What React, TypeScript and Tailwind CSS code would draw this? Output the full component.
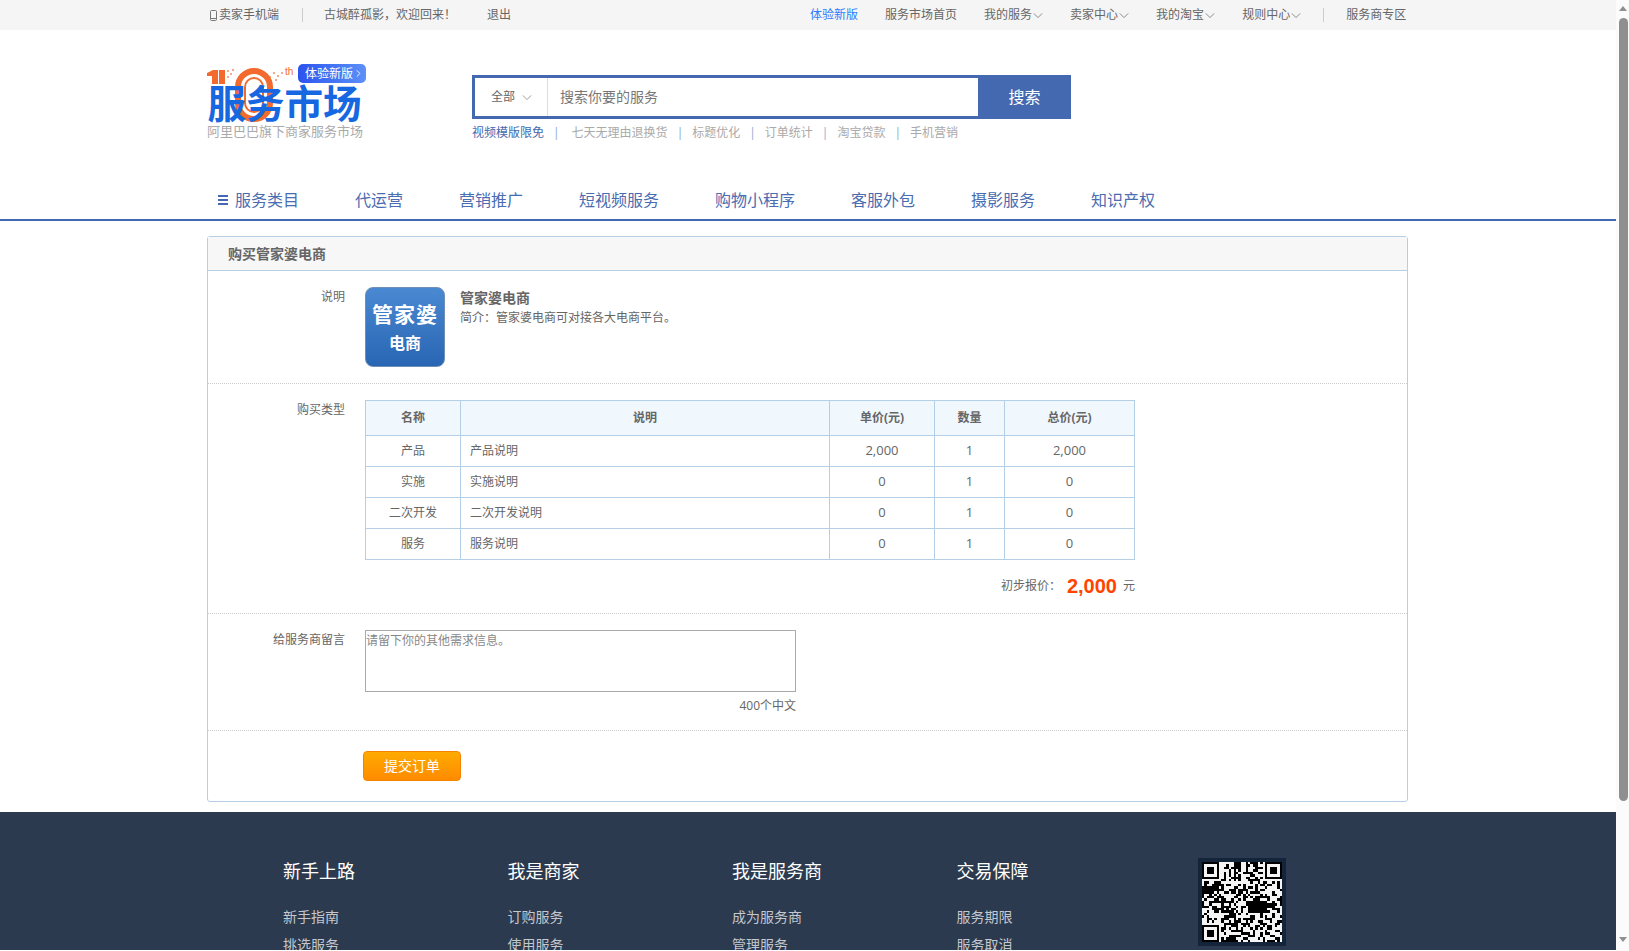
import { ChevronRight } from "lucide-react";

const FONT = "font-['Open_Sans','Noto_Sans_CJK_SC',sans-serif]";

const Chevron = ({ className }: { className: string }) => (
  <svg viewBox="0 0 12 8" fill="none" stroke="currentColor" strokeWidth="1" className={className}>
    <path d="M1 1.5 6 6.5 11 1.5" />
  </svg>
);

const Sep = () => <span className="text-[#8fa9d0] text-xs">|</span>;

const TopMenu = ({ label }: { label: string }) => (
  <span className="flex items-center gap-px">
    {label}
    <Chevron className="w-[10px] h-[7px] text-[#777]" />
  </span>
);

const TopBar = () => (
  <div className="h-[30px] bg-[#f5f5f5] flex items-center pl-[210px] text-xs text-[#666]">
    <svg viewBox="0 0 7 11" fill="none" stroke="#777" className="w-[7px] h-[11px] mr-[2px]">
      <rect x="0.5" y="0.5" width="6" height="10" rx="1" />
      <path d="M0.5 8.5h6" />
    </svg>
    <span>卖家手机端</span>
    <span className="w-px h-[14px] bg-[#ccc] ml-[23px] mr-[21px]" />
    <span>古城醉孤影，欢迎回来！</span>
    <span className="ml-[31px]">退出</span>
    <div className="flex items-center gap-[27px] ml-[299px]">
      <span className="text-[#2b7cff]">体验新版</span>
      <span>服务市场首页</span>
      <TopMenu label="我的服务" />
      <TopMenu label="卖家中心" />
      <TopMenu label="我的淘宝" />
      <TopMenu label="规则中心" />
      <span className="w-px h-[14px] bg-[#ccc] -mx-[5px]" />
      <span>服务商专区</span>
    </div>
  </div>
);

const Logo = () => (
  <div className="relative w-[155px] h-[76px] shrink-0">
    <svg viewBox="0 0 155 60" className="absolute left-0 top-[2px] w-[155px] h-[60px]" fill="none">
      <path d="M0 7 6 4h5v14H5V10H0z" fill="#f26a2e" />
      <rect x="12" y="4" width="6" height="14" fill="#f26a2e" />
      <g fill="#f6a98a">
        <rect x="20" y="4" width="2" height="2" />
        <rect x="23" y="7" width="2" height="2" />
        <rect x="20" y="10" width="2" height="2" />
        <rect x="25" y="3" width="2" height="2" />
        <rect x="66" y="6" width="2" height="2" />
        <rect x="70" y="9" width="2" height="2" />
        <rect x="74" y="6" width="2" height="2" />
        <rect x="68" y="13" width="2" height="2" />
        <rect x="62" y="10" width="2" height="2" />
      </g>
      <rect x="31" y="5" width="32" height="48" rx="16" stroke="#f26a2e" strokeWidth="6" />
      <rect x="38" y="12" width="18" height="34" rx="9" stroke="#f26a2e" strokeWidth="2" />
    </svg>
    <span className="absolute left-[78px] top-[3px] text-[10px] leading-none text-[#f26a2e] font-['Liberation_Sans',sans-serif]">
      th
    </span>
    <span className="absolute left-[91px] top-0 w-[68px] h-[19px] rounded-[5px] bg-gradient-to-r from-[#2d52ee] to-[#5d90f8] text-white text-xs flex items-center pl-[7px]">
      体验新版
      <ChevronRight size={11} strokeWidth={2} />
    </span>
    <span className="absolute left-0 top-[17px] w-[155px] text-center text-[38.5px] leading-[44px] font-bold text-[#1767e0] whitespace-nowrap">
      服务市场
    </span>
    <span className="absolute left-0 top-[58px] text-[13px] leading-[18px] text-[#aaa] whitespace-nowrap">
      阿里巴巴旗下商家服务市场
    </span>
  </div>
);

const hotLinks = ["七天无理由退换货", "标题优化", "订单统计", "淘宝贷款", "手机营销"];

const SearchBox = () => (
  <div className="ml-[110px] mt-[11px] w-[599px]">
    <div className="flex h-[44px] border-[3px] border-[#4469b0]">
      <div className="w-[73px] border-r border-[#ddd] text-xs text-[#666] flex items-center pl-[16px] gap-[7px]">
        全部
        <Chevron className="w-[10px] h-[7px] text-[#888]" />
      </div>
      <div className="flex-1 text-sm text-[#777] flex items-center pl-[12px]">搜索你要的服务</div>
      <div className="w-[93px] -my-[3px] -mr-[3px] bg-[#4469b0] text-white text-base flex items-center justify-center">
        搜索
      </div>
    </div>
    <div className="flex items-center gap-[9px] mt-[6px] text-xs text-[#aaa]">
      <span className="text-[#4469b0]">视频模版限免</span>
      {hotLinks.map((link) => (
        <span key={link} className="flex items-center gap-[9px]">
          <Sep />
          <span className={link === hotLinks[0] ? "ml-[3px]" : ""}>{link}</span>
        </span>
      ))}
    </div>
  </div>
);

const navItems = ["代运营", "营销推广", "短视频服务", "购物小程序", "客服外包", "摄影服务", "知识产权"];

const Nav = () => (
  <div className="h-[43px] border-b-2 border-[#4469b0] flex items-start pt-[11px] pl-[218px] text-base leading-[22px] text-[#4a6cb0]">
    <div className="flex items-center gap-[7px] mr-[56px]">
      <div className="w-[10px] flex flex-col gap-[2px]">
        <span className="h-[2px] bg-[#4469b0]" />
        <span className="h-[2px] bg-[#4469b0]" />
        <span className="h-[2px] bg-[#4469b0]" />
      </div>
      服务类目
    </div>
    <div className="flex gap-[56px]">
      {navItems.map((item) => (
        <span key={item}>{item}</span>
      ))}
    </div>
  </div>
);

const AppIcon = () => (
  <div className="w-[80px] h-[80px] rounded-[8px] border border-[#6f8fb5] bg-gradient-to-b from-[#4a89d2] to-[#2865b3] flex flex-col items-center text-white font-bold shrink-0">
    <span className="text-[21px] leading-[26px] mt-[13px] tracking-[1px] whitespace-nowrap">管家婆</span>
    <span className="text-[16px] leading-[20px] mt-[6px]">电商</span>
  </div>
);

const tableRows = [
  ["产品", "产品说明", "2,000", "1", "2,000"],
  ["实施", "实施说明", "0", "1", "0"],
  ["二次开发", "二次开发说明", "0", "1", "0"],
  ["服务", "服务说明", "0", "1", "0"],
];

const OrderTable = () => (
  <table className="w-[770px] border-collapse table-fixed text-xs text-[#666] border border-[#b5cfe6]">
    <thead>
      <tr className="h-[35px] bg-[#f0f7fd] font-bold">
        <th className="w-[95px] border border-[#b5cfe6]">名称</th>
        <th className="w-[369px] border border-[#b5cfe6]">说明</th>
        <th className="w-[105px] border border-[#b5cfe6]">单价(元)</th>
        <th className="w-[70px] border border-[#b5cfe6]">数量</th>
        <th className="border border-[#b5cfe6]">总价(元)</th>
      </tr>
    </thead>
    <tbody>
      {tableRows.map((row) => (
        <tr key={row[0]} className="h-[31px]">
          <td className="border border-[#b5cfe6] text-center">{row[0]}</td>
          <td className="border border-[#b5cfe6] pl-[9px]">{row[1]}</td>
          <td className="border border-[#b5cfe6] text-center text-[13px]">{row[2]}</td>
          <td className="border border-[#b5cfe6] text-center text-[13px]">{row[3]}</td>
          <td className="border border-[#b5cfe6] text-center text-[13px]">{row[4]}</td>
        </tr>
      ))}
    </tbody>
  </table>
);

const Label = ({ children }: { children: string }) => (
  <div className="w-[137px] mr-[20px] shrink-0 text-right text-xs leading-[20px] text-[#666]">{children}</div>
);

const OrderCard = () => (
  <div className="ml-[207px] mt-[15px] w-[1201px] border border-[#b8cfe3] rounded-[3px] text-[#666]">
    <div className="h-[34px] bg-[#f7f7f7] border-b border-[#b8cfe3] flex items-center pl-[20px] text-sm font-bold">
      购买管家婆电商
    </div>
    <div className="flex pt-[16px] pb-[16px] border-b border-dotted border-[#ccc]">
      <Label>说明</Label>
      <AppIcon />
      <div className="ml-[15px]">
        <div className="text-sm font-bold leading-[20px] mt-[1px]">管家婆电商</div>
        <div className="text-xs leading-[20px]">简介：管家婆电商可对接各大电商平台。</div>
      </div>
    </div>
    <div className="flex pt-[16px] border-b border-dotted border-[#ccc] h-[230px]">
      <Label>购买类型</Label>
      <div>
        <OrderTable />
        <div className="flex items-center justify-end h-[24px] mt-[14px] text-xs">
          初步报价：
          <span className="ml-[6px] mr-[6px] text-[20px] font-bold text-[#ff4400] font-['Liberation_Sans',sans-serif]">
            2,000
          </span>
          元
        </div>
      </div>
    </div>
    <div className="flex pt-[16px] border-b border-dotted border-[#ccc] h-[117px]">
      <Label>给服务商留言</Label>
      <div className="w-[431px]">
        <textarea
          readOnly
          placeholder="请留下你的其他需求信息。"
          className="block w-full h-[62px] border border-[#aaa] text-xs leading-[20px] resize-none outline-none placeholder:text-[#888]"
        />
        <div className="text-right text-xs leading-[20px] mt-[4px]">400个中文</div>
      </div>
    </div>
    <div className="pl-[155px] pt-[20px] pb-[20px]">
      <div className="w-[98px] h-[30px] rounded-[4px] border border-[#f58300] bg-gradient-to-b from-[#ffab00] to-[#ff8a00] text-white text-sm flex items-center justify-center">
        提交订单
      </div>
    </div>
  </div>
);

const footerCols = [
  { title: "新手上路", links: ["新手指南", "挑选服务"] },
  { title: "我是商家", links: ["订购服务", "使用服务"] },
  { title: "我是服务商", links: ["成为服务商", "管理服务"] },
  { title: "交易保障", links: ["服务期限", "服务取消"] },
];

// not a scannable code, just the look of one
const QrCode = () => {
  const size = 33;
  const cells: { x: number; y: number }[] = [];
  const inFinder = (x: number, y: number) => (x < 8 && y < 8) || (x > 24 && y < 8) || (x < 8 && y > 24);
  let seed = 1771;
  for (let y = 0; y < size; y++) {
    for (let x = 0; x < size; x++) {
      seed = (seed * 75 + 74) % 65537;
      const blob = (x > 18 && x < 27 && y > 15 && y < 21) || (x < 5 && y > 9 && y < 13);
      if (!inFinder(x, y) && (blob || seed % 100 < 48)) cells.push({ x, y });
    }
  }
  const finders = [
    [0, 0],
    [26, 0],
    [0, 26],
  ];
  return (
    <div className="w-[88px] h-[88px] bg-[#14243a] p-[4px] shrink-0">
      <svg viewBox="0 0 33 33" shapeRendering="crispEdges" className="block w-[80px] h-[80px] bg-[#f4f4f4]">
        {cells.map((c) => (
          <rect key={`${c.x}-${c.y}`} x={c.x} y={c.y} width="1" height="1" fill="#000" />
        ))}
        {finders.map(([x, y]) => (
          <g key={`${x}-${y}`}>
            <rect x={x} y={y} width="7" height="7" fill="#000" />
            <rect x={x + 1} y={y + 1} width="5" height="5" fill="#f4f4f4" />
            <rect x={x + 2} y={y + 2} width="3" height="3" fill="#000" />
          </g>
        ))}
      </svg>
    </div>
  );
};

const Footer = () => (
  <div className="mt-[10px] h-[138px] overflow-hidden bg-[#2c3a4f] flex pl-[283px] pt-[47px]">
    {footerCols.map((col) => (
      <div key={col.title} className="w-[224.5px] shrink-0">
        <div className="text-lg leading-[24px] text-white">{col.title}</div>
        <div className="mt-[24px] flex flex-col gap-[8px] text-sm leading-[20px] text-[#c4c8ce]">
          {col.links.map((link) => (
            <span key={link}>{link}</span>
          ))}
        </div>
      </div>
    ))}
    <div className="ml-[17px] -mt-[1px]">
      <QrCode />
    </div>
  </div>
);

const Scrollbar = () => (
  <div className="w-[13px] shrink-0 bg-[#fbfbfb] flex flex-col items-center pl-px">
    <div className="mt-[6px] w-0 h-0 border-x-[4.5px] border-x-transparent border-b-[5px] border-b-[#8f8f8f]" />
    <div className="mt-[7px] w-[9px] h-[783px] rounded-[5px] bg-[#8f8f8f]" />
    <div className="mt-[136px] w-0 h-0 border-x-[4.5px] border-x-transparent border-t-[5px] border-t-[#8f8f8f]" />
  </div>
);

export default function App() {
  return (
    <div className={`h-[951px] w-[1629px] overflow-hidden flex bg-white ${FONT}`}>
      <div className="w-[1616px] shrink-0">
        <TopBar />
        <div className="h-[148px] pl-[207px] pt-[34px] flex items-start">
          <Logo />
          <SearchBox />
        </div>
        <Nav />
        <OrderCard />
        <Footer />
      </div>
      <Scrollbar />
    </div>
  );
}
